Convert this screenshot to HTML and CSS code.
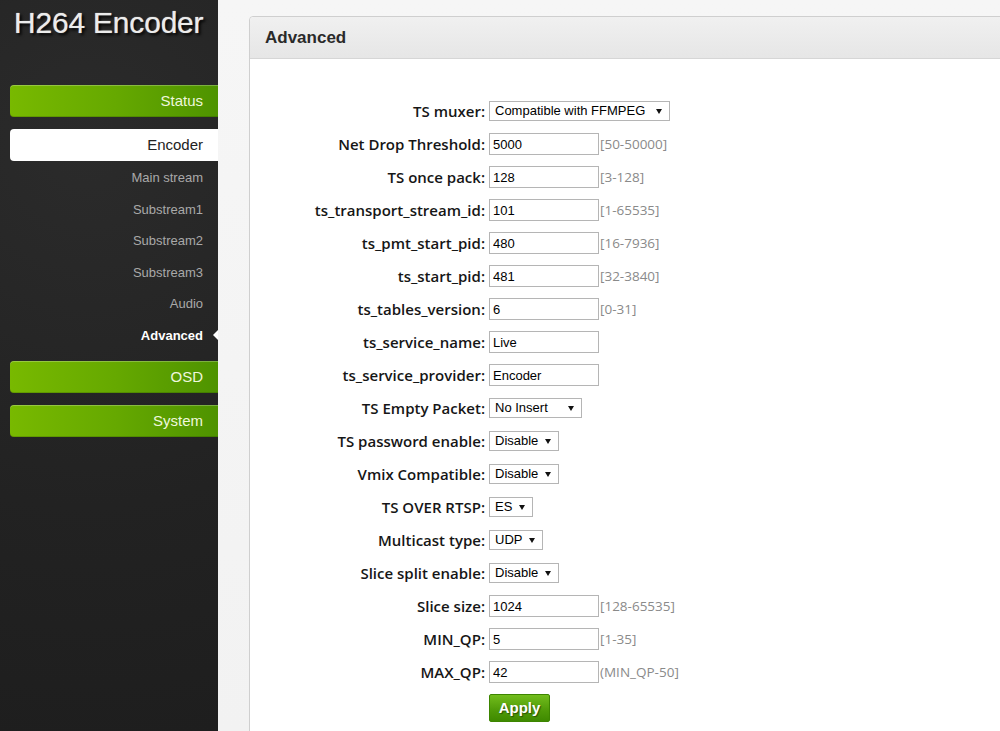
FILE: index.html
```html
<!DOCTYPE html>
<html lang="en">
<head>
  <meta charset="UTF-8">
  <title>H264 Encoder - Advanced</title>
  <link rel="stylesheet" href="styles.css">
</head>
<body>
<div class="page">
  <aside class="sidebar">
    <div class="logo">H264 Encoder</div>
    <nav class="menu">
      <a class="menu-btn" href="#">Status</a>
      <a class="menu-btn active" href="#">Encoder</a>
      <ul class="submenu">
        <li><a href="#">Main stream</a></li>
        <li><a href="#">Substream1</a></li>
        <li><a href="#">Substream2</a></li>
        <li><a href="#">Substream3</a></li>
        <li><a href="#">Audio</a></li>
        <li class="current"><a href="#">Advanced</a></li>
      </ul>
      <a class="menu-btn osd" href="#">OSD</a>
      <a class="menu-btn" href="#">System</a>
    </nav>
  </aside>

  <main class="content">
    <div class="panel">
      <div class="panel-head">Advanced</div>
      <form class="form">
        <div class="row">
          <label>TS muxer:</label>
          <div class="field"><span class="sel w-muxer">Compatible with FFMPEG</span></div>
        </div>
        <div class="row">
          <label>Net Drop Threshold:</label>
          <div class="field"><input type="text" value="5000"><span class="hint">[50-50000]</span></div>
        </div>
        <div class="row">
          <label>TS once pack:</label>
          <div class="field"><input type="text" value="128"><span class="hint">[3-128]</span></div>
        </div>
        <div class="row">
          <label>ts_transport_stream_id:</label>
          <div class="field"><input type="text" value="101"><span class="hint">[1-65535]</span></div>
        </div>
        <div class="row">
          <label>ts_pmt_start_pid:</label>
          <div class="field"><input type="text" value="480"><span class="hint">[16-7936]</span></div>
        </div>
        <div class="row">
          <label>ts_start_pid:</label>
          <div class="field"><input type="text" value="481"><span class="hint">[32-3840]</span></div>
        </div>
        <div class="row">
          <label>ts_tables_version:</label>
          <div class="field"><input type="text" value="6"><span class="hint">[0-31]</span></div>
        </div>
        <div class="row">
          <label>ts_service_name:</label>
          <div class="field"><input type="text" value="Live"></div>
        </div>
        <div class="row">
          <label>ts_service_provider:</label>
          <div class="field"><input type="text" value="Encoder"></div>
        </div>
        <div class="row">
          <label>TS Empty Packet:</label>
          <div class="field"><span class="sel w-insert">No Insert</span></div>
        </div>
        <div class="row">
          <label>TS password enable:</label>
          <div class="field"><span class="sel w-disable">Disable</span></div>
        </div>
        <div class="row">
          <label>Vmix Compatible:</label>
          <div class="field"><span class="sel w-disable">Disable</span></div>
        </div>
        <div class="row">
          <label>TS OVER RTSP:</label>
          <div class="field"><span class="sel w-es">ES</span></div>
        </div>
        <div class="row">
          <label>Multicast type:</label>
          <div class="field"><span class="sel w-udp">UDP</span></div>
        </div>
        <div class="row">
          <label>Slice split enable:</label>
          <div class="field"><span class="sel w-disable">Disable</span></div>
        </div>
        <div class="row">
          <label>Slice size:</label>
          <div class="field"><input type="text" value="1024"><span class="hint">[128-65535]</span></div>
        </div>
        <div class="row">
          <label>MIN_QP:</label>
          <div class="field"><input type="text" value="5"><span class="hint">[1-35]</span></div>
        </div>
        <div class="row">
          <label>MAX_QP:</label>
          <div class="field"><input type="text" value="42"><span class="hint">(MIN_QP-50]</span></div>
        </div>
        <div class="row apply-row">
          <span></span>
          <div class="field"><button type="button" class="apply">Apply</button></div>
        </div>
      </form>
    </div>
  </main>
</div>
</body>
</html>
```

FILE: styles.css
```css
html, body {
  margin: 0;
  padding: 0;
  height: 100%;
  overflow: hidden;
}

body {
  font-family: "Liberation Sans", Arial, sans-serif;
  background-color: #f3f3f3;
  color: #222;
}

.page {
  display: flex;
  height: 731px;
}

/* sidebar */

.sidebar {
  width: 218px;
  flex: none;
  background-color: #232323;
  background-image: radial-gradient(circle at 40% 20%, #2b2b2b 0%, #222 60%, #1e1e1e 100%);
}

.logo {
  padding: 6px 0 0 14px;
  font-size: 30px;
  line-height: 34px;
  color: #ececec;
  letter-spacing: -0.2px;
  text-shadow: 2px 2px 3px #000, 0 0 1px #fff;
}

.menu {
  margin-top: 45px;
}

.menu-btn {
  display: block;
  margin-left: 10px;
  height: 32px;
  line-height: 32px;
  padding-right: 15px;
  text-align: right;
  font-size: 15px;
  color: #eef7dc;
  text-decoration: none;
  border-radius: 4px 0 0 4px;
  background: linear-gradient(to right, #78b900 0%, #66a900 50%, #4e9300 100%);
  box-shadow: inset 0 1px 0 rgba(255,255,255,0.25), inset 0 -1px 0 rgba(0,0,0,0.15);
  margin-bottom: 12px;
}

.menu-btn.active {
  background: #fff;
  color: #222;
  box-shadow: none;
  margin-bottom: 0;
}

.menu-btn.osd {
  margin-top: 11px;
}

.submenu {
  list-style: none;
  margin: 0;
  padding: 0;
}

.submenu li {
  height: 31.5px;
  line-height: 31.5px;
  text-align: right;
  padding-right: 15px;
  position: relative;
}

.submenu a {
  font-size: 13px;
  color: #a9a9a9;
  text-decoration: none;
}

.submenu li.current a {
  color: #fff;
  font-weight: bold;
}

.submenu li.current::after {
  content: "";
  position: absolute;
  right: 0;
  top: 11px;
  border-top: 5px solid transparent;
  border-bottom: 5px solid transparent;
  border-right: 5px solid #fff;
}

/* content */

.content {
  flex: 1;
  padding: 16px 0 0 31px;
  background: linear-gradient(#f6f6f6, #f2f2f2);
}

.panel {
  width: 800px;
  height: 760px;
  background-color: #fff;
  border: 1px solid #cfcfcf;
  border-radius: 4px;
}

.panel-head {
  height: 41px;
  line-height: 41px;
  padding-left: 15px;
  font-size: 17px;
  font-weight: bold;
  color: #2a2a2a;
  background: linear-gradient(#f0f0f0, #e6e6e6);
  border-bottom: 1px solid #d6d6d6;
  border-radius: 4px 4px 0 0;
}

.form {
  padding-top: 35px;
}

.row {
  display: grid;
  grid-template-columns: 235px auto;
  column-gap: 4px;
  height: 33px;
  align-items: center;
}

.row label {
  text-align: right;
  font-family: "Open Sans", sans-serif;
  font-weight: 600;
  font-size: 15px;
  line-height: 18px;
  color: #161616;
}

.field {
  display: flex;
  align-items: center;
}

input {
  width: 110px;
  height: 22px;
  box-sizing: border-box;
  padding: 2px 3px 0;
  border: 1px solid #b5b5b5;
  font-family: "Liberation Sans", Arial, sans-serif;
  font-size: 13px;
  color: #000;
  margin: 0;
}

.hint {
  font-family: "Open Sans", sans-serif;
  font-size: 13.5px;
  color: #8a8a8a;
  margin-left: 1px;
}

.sel {
  position: relative;
  display: inline-block;
  box-sizing: border-box;
  height: 20px;
  line-height: 18px;
  padding-left: 5px;
  border: 1px solid #b5b5b5;
  background-color: #fff;
  font-size: 13px;
  color: #000;
}

.sel::after {
  content: "";
  position: absolute;
  right: 7px;
  top: 7px;
  border-left: 3px solid transparent;
  border-right: 3px solid transparent;
  border-top: 5px solid #111;
}

.w-muxer { width: 181px; }
.w-insert { width: 93px; }
.w-disable { width: 70px; }
.w-es { width: 44px; }
.w-udp { width: 54px; }

.apply-row {
  height: 39px;
  margin-top: 0;
}

.apply {
  width: 61px;
  height: 28px;
  padding: 0;
  border: 1px solid #3d8500;
  border-radius: 2px;
  background: linear-gradient(#72bd1c, #4f9a08 60%, #3f8a00);
  color: #fff;
  font-family: "Liberation Sans", Arial, sans-serif;
  font-size: 15px;
  font-weight: bold;
  text-shadow: 1px 1px 1px rgba(0,0,0,0.45);
  cursor: pointer;
}
```
